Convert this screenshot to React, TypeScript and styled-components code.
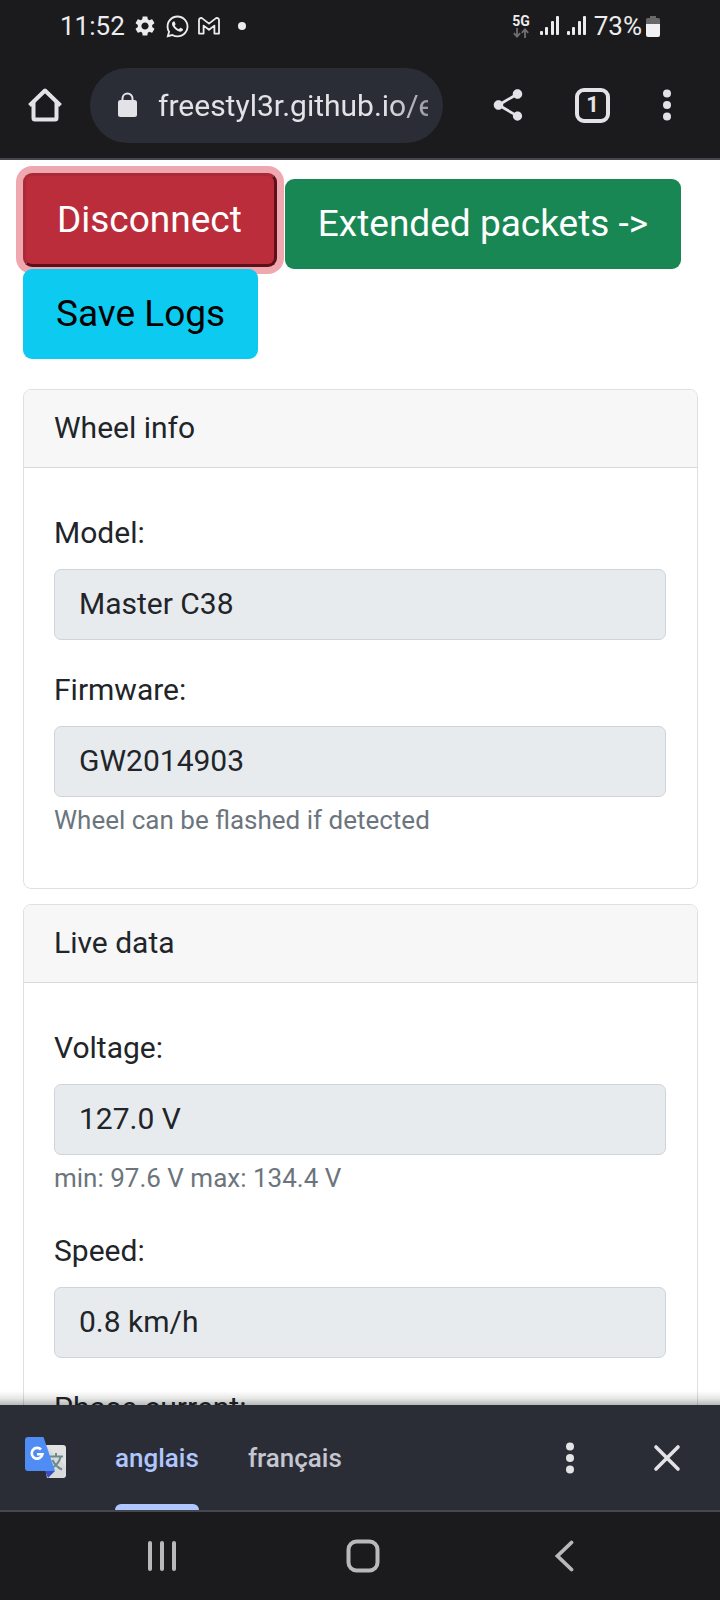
import React from "react";
import styled, { createGlobalStyle } from "styled-components";
import { MdSettings, MdShare } from "react-icons/md";
import { FaWhatsapp } from "react-icons/fa";

const GlobalStyle = createGlobalStyle`
  *, *::before, *::after { box-sizing: border-box; }
  body {
    margin: 0;
    background: #fff;
    font-family: Roboto, "Liberation Sans", sans-serif;
  }
  button, input { font-family: inherit; }
`;

const Screen = styled.div`
  display: flex;
  flex-direction: column;
  height: 100vh;
`;

/* ---------- phone status bar ---------- */

const StatusBar = styled.div`
  display: flex;
  justify-content: space-between;
  align-items: center;
  height: 52px;
  padding: 0 60px;
  background: #1b1b1d;
  color: #ececee;
  font-size: 26px;
  line-height: 32px;
`;

const StatusGroup = styled.div<{ $gap: number }>`
  display: flex;
  align-items: center;
  gap: ${(p) => p.$gap}px;
`;

const Network = styled.span`
  display: flex;
  flex-direction: column;
  align-items: center;
  font-size: 14px;
  font-weight: 700;
  line-height: 13px;
`;

/* ---------- browser toolbar ---------- */

const Toolbar = styled.header`
  display: flex;
  align-items: center;
  height: 108px;
  padding: 0 16px 0 0;
  background: #1b1b1d;
  border-bottom: 2px solid #46464f;
  color: #e3e2e6;
`;

const IconButton = styled.button<{ $width: number }>`
  display: flex;
  flex: none;
  align-items: center;
  justify-content: center;
  width: ${(p) => p.$width}px;
  height: 76px;
  padding: 0;
  border: 0;
  background: none;
  color: inherit;
`;

const AddressBar = styled.label`
  display: flex;
  flex: 1;
  align-items: center;
  gap: 20px;
  min-width: 0;
  height: 75px;
  margin-right: 18px;
  padding: 0 15px 0 27px;
  border-radius: 38px;
  background: #2b2d36;
`;

const AddressInput = styled.input`
  flex: 1;
  min-width: 0;
  height: 44px;
  padding: 0;
  border: 0;
  outline: 0;
  background: none;
  color: #e3e2e6;
  font-size: 30px;
  mask-image: linear-gradient(to left, rgba(0, 0, 0, 0.6), #000 44px);
`;

const TabCount = styled.span`
  display: flex;
  align-items: center;
  justify-content: center;
  width: 35px;
  height: 35px;
  border: 4px solid #e3e2e6;
  border-radius: 9px;
  font-size: 22px;
  font-weight: 700;
  line-height: 24px;
`;

/* ---------- web page ---------- */

const Page = styled.main`
  flex: 1;
  min-height: 0;
  overflow-y: auto;
  scrollbar-width: none;
  padding: 13px 22px 0 23px;
  color: #212529;
  font-size: 30px;
  line-height: 45px;
`;

const Actions = styled.div`
  display: flex;
  flex-wrap: wrap;
  align-items: flex-end;
  column-gap: 8px;
  margin-bottom: 30px;
`;

const ActionButton = styled.button<{ $bg: string; $color: string }>`
  padding: 17px 33px;
  border: 0;
  border-radius: 9px;
  background: ${(p) => p.$bg};
  color: ${(p) => p.$color};
  font-size: 37px;
  line-height: 56px;
`;

const FocusedButton = styled(ActionButton)`
  margin-bottom: 2px;
  padding: 16px 32px 16px 31px;
  border: 3px solid;
  border-color: #ab2a37 #5c1019 #5c1019 #ab2a37;
  box-shadow: 0 0 0 7px #f0a8b0;
`;

const Card = styled.section`
  margin-bottom: 15px;
  border: 1px solid #dfdfdf;
  border-radius: 8px;
  background: #fff;
`;

const CardHeader = styled.h2`
  margin: 0;
  padding: 15px 30px 17px;
  border-bottom: 1px solid #d9d9d9;
  border-radius: 7px 7px 0 0;
  background: #f7f7f7;
  font-size: 30px;
  font-weight: 400;
  line-height: 45px;
`;

const CardBody = styled.div`
  display: flex;
  flex-direction: column;
  gap: 27px;
  padding: 42px 31px 45px 30px;
`;

const FieldBox = styled.div`
  display: flex;
  flex-direction: column;
`;

const FieldLabel = styled.label`
  margin-bottom: 14px;
`;

const FieldInput = styled.input`
  width: 100%;
  height: 71px;
  padding: 0 24px 3px;
  border: 1px solid #ced4da;
  border-radius: 7px;
  outline: 0;
  background: #e8ebee;
  color: #212529;
  font-size: 30px;
`;

const FieldHint = styled.small`
  margin: 4px 0;
  color: #6c757d;
  font-size: 26px;
  line-height: 38px;
`;

/* ---------- translate bar ---------- */

const TranslateBar = styled.div`
  position: relative;
  display: flex;
  align-items: stretch;
  height: 107px;
  padding: 0 16px 0 24px;
  border-bottom: 2px solid #46464f;
  background: #2b2d36;
  color: #e3e2e6;

  &::before {
    content: "";
    position: absolute;
    right: 0;
    bottom: 100%;
    left: 0;
    height: 14px;
    background: linear-gradient(to top, rgba(0, 0, 0, 0.28), rgba(0, 0, 0, 0.1) 45%, transparent);
    pointer-events: none;
  }

  > svg, > button { align-self: center; }
`;

const Languages = styled.div`
  display: flex;
  flex: 1;
  gap: 49px;
  margin-left: 48px;
`;

const Language = styled.button<{ $active?: boolean }>`
  position: relative;
  padding: 0;
  border: 0;
  background: none;
  color: ${(p) => (p.$active ? "#b0c6ff" : "#c6c6d0")};
  font-size: 26px;
  font-weight: 500;
  line-height: 32px;

  &::after {
    content: "";
    display: ${(p) => (p.$active ? "block" : "none")};
    position: absolute;
    right: 0;
    bottom: 0;
    left: 0;
    height: 6px;
    border-radius: 6px 6px 0 0;
    background: #b0c6ff;
  }
`;

/* ---------- system navigation ---------- */

const NavBar = styled.nav`
  display: flex;
  flex: none;
  height: 88px;
  padding: 0 55px 0 61px;
  background: #1b1b1d;
  color: #b9b9bb;
`;

const NavButton = styled.button`
  display: flex;
  flex: 1;
  align-items: center;
  justify-content: center;
  padding: 0;
  border: 0;
  background: none;
  color: inherit;
`;

/* ---------- icons ---------- */

const MailIcon = () => (
  <svg width="22" height="18" viewBox="0 0 22 18" fill="none" stroke="currentColor" strokeWidth="1.8" strokeLinejoin="round">
    <path d="M1 3.2C1 1.2 3.2.4 4.6 1.6L11 6.6 17.4 1.6C18.8.4 21 1.2 21 3.2V16.6H16.4V8.6L11 12.8 5.6 8.6V16.6H1Z" />
  </svg>
);

const DataArrows = () => (
  <svg width="16" height="10" viewBox="0 0 16 10" fill="none" stroke="#6f6f72" strokeWidth="1.8">
    <path d="M4 0V8.5M.8 5.2 4 8.6 7.2 5.2M12 10V1.5M8.8 4.8 12 1.4 15.2 4.8" />
  </svg>
);

const SignalIcon = () => (
  <svg width="19" height="20" viewBox="0 0 19 20" fill="currentColor">
    <rect x="0" y="15" width="3" height="4" rx="1" />
    <rect x="5" y="11" width="3" height="8" rx="1" />
    <rect x="11" y="5" width="3" height="14" rx="1" />
    <rect x="16" y="0" width="3" height="19" rx="1" />
  </svg>
);

const BatteryIcon = () => (
  <svg width="14" height="21" viewBox="0 0 14 21">
    <path d="M4 0H10V2H12.5Q14 2 14 4V9H0V4Q0 2 1.5 2H4Z" fill="#68686b" />
    <path d="M0 8H14V19Q14 21 12 21H2Q0 21 0 19Z" fill="#f1f1f3" />
  </svg>
);

const HomeIcon = () => (
  <svg width="36" height="36" viewBox="0 0 36 36" fill="none" stroke="currentColor" strokeWidth="4">
    <path d="M2.5 18.5 18 3.5 33.5 18.5" strokeLinejoin="round" />
    <path d="M6.5 15V31Q6.5 32.5 8 32.5H28Q29.5 32.5 29.5 31V15" />
  </svg>
);

const LockIcon = () => (
  <svg width="21" height="26" viewBox="0 0 21 26">
    <path d="M5.5 10V6.5a5 5 0 0 1 10 0V10" fill="none" stroke="currentColor" strokeWidth="2" />
    <rect x="1" y="8" width="19" height="17" rx="2.5" fill="currentColor" />
  </svg>
);

const DotsIcon = () => (
  <svg width="10" height="32" viewBox="0 0 10 32" fill="currentColor">
    <circle cx="5" cy="4.5" r="4" />
    <circle cx="5" cy="16" r="4" />
    <circle cx="5" cy="27.5" r="4" />
  </svg>
);

const CloseIcon = () => (
  <svg width="28" height="28" viewBox="0 0 28 28" fill="none" stroke="currentColor" strokeWidth="3.6" strokeLinecap="round">
    <path d="M3 3 25 25M25 3 3 25" />
  </svg>
);

const TranslateIcon = () => (
  <svg width="43" height="42" viewBox="0 0 43 42" fill="none">
    <path d="M17 8H39Q42 8 42 11V38Q42 41 39 41H23Z" fill="#e2e2e2" />
    <path d="M21 8 30 33 23 41H38L42 36V30L30 17Z" fill="#d2d2d4" opacity=".5" />
    <path d="M25 19.5H39M32 16V19.5M26.5 32C32 29 35.5 25 36.5 19.8M28.5 23C30.5 27.5 33.5 30.5 38 32.5" stroke="#6d8a8d" strokeWidth="2" />
    <path d="M21 34H31L24 41Z" fill="#3a4fbf" />
    <path d="M4 0H19.5L31 34H4Q1 34 1 31V3Q1 0 4 0Z" fill="#4f8df5" />
    <path d="M17 12.5A5.4 5.4 0 1 0 18.4 17.3H13" stroke="#fff" strokeWidth="2.6" />
  </svg>
);

const RecentsIcon = () => (
  <svg width="30" height="32" viewBox="0 0 30 32" stroke="currentColor" strokeWidth="4" strokeLinecap="round">
    <path d="M3 3V29M15 3V29M27 3V29" />
  </svg>
);

const NavHomeIcon = () => (
  <svg width="34" height="34" viewBox="0 0 34 34" fill="none" stroke="currentColor" strokeWidth="4">
    <rect x="2.5" y="2.5" width="29" height="29" rx="8" />
  </svg>
);

const BackIcon = () => (
  <svg width="20" height="32" viewBox="0 0 20 32" fill="none" stroke="currentColor" strokeWidth="3.8" strokeLinecap="round">
    <path d="M17.5 2.5 3.5 16 17.5 29.5" />
  </svg>
);

interface FieldProps {
  id: string;
  label: string;
  value?: string;
  hint?: string;
}

const Field = ({ id, label, value = "", hint }: FieldProps) => (
  <FieldBox>
    <FieldLabel htmlFor={id}>{label}</FieldLabel>
    <FieldInput id={id} type="text" value={value} readOnly />
    {hint && <FieldHint>{hint}</FieldHint>}
  </FieldBox>
);

export default function App() {
  return (
    <Screen>
      <GlobalStyle />
      <StatusBar>
        <StatusGroup $gap={8}>
          <span>11:52</span>
          <MdSettings size={24} />
          <FaWhatsapp size={25} />
          <MailIcon />
          <svg width="26" height="8" viewBox="0 0 26 8" fill="currentColor">
            <circle cx="14" cy="4" r="4" />
          </svg>
        </StatusGroup>
        <StatusGroup $gap={8}>
          <StatusGroup $gap={10}>
            <Network>
              5G
              <DataArrows />
            </Network>
            <SignalIcon />
          </StatusGroup>
          <SignalIcon />
          <StatusGroup $gap={4}>
            <span>73%</span>
            <BatteryIcon />
          </StatusGroup>
        </StatusGroup>
      </StatusBar>

      <Toolbar>
        <IconButton $width={90} aria-label="Home">
          <HomeIcon />
        </IconButton>
        <AddressBar>
          <LockIcon />
          <AddressInput type="text" aria-label="Address" value="freestyl3r.github.io/e" readOnly />
        </AddressBar>
        <IconButton $width={94} aria-label="Share">
          <MdShare size={38} />
        </IconButton>
        <IconButton $width={75} aria-label="Tabs">
          <TabCount>1</TabCount>
        </IconButton>
        <IconButton $width={74} aria-label="Menu">
          <DotsIcon />
        </IconButton>
      </Toolbar>

      <Page>
        <Actions>
          <FocusedButton $bg="#bb2d3b" $color="#fff">Disconnect</FocusedButton>
          <ActionButton $bg="#198754" $color="#fff">Extended packets -&gt;</ActionButton>
          <ActionButton $bg="#0dcaf0" $color="#000">Save Logs</ActionButton>
        </Actions>

        <Card>
          <CardHeader>Wheel info</CardHeader>
          <CardBody>
            <Field id="model" label="Model:" value="Master C38" />
            <Field id="firmware" label="Firmware:" value="GW2014903" hint="Wheel can be flashed if detected" />
          </CardBody>
        </Card>

        <Card>
          <CardHeader>Live data</CardHeader>
          <CardBody>
            <Field id="voltage" label="Voltage:" value="127.0 V" hint="min: 97.6 V max: 134.4 V" />
            <Field id="speed" label="Speed:" value="0.8 km/h" />
            <Field id="phase-current" label="Phase current:" />
          </CardBody>
        </Card>
      </Page>

      <TranslateBar>
        <TranslateIcon />
        <Languages>
          <Language $active>anglais</Language>
          <Language>français</Language>
        </Languages>
        <IconButton $width={120} aria-label="Translate options">
          <DotsIcon />
        </IconButton>
        <IconButton $width={74} aria-label="Close">
          <CloseIcon />
        </IconButton>
      </TranslateBar>

      <NavBar>
        <NavButton aria-label="Recent apps">
          <RecentsIcon />
        </NavButton>
        <NavButton aria-label="Home screen">
          <NavHomeIcon />
        </NavButton>
        <NavButton aria-label="Back">
          <BackIcon />
        </NavButton>
      </NavBar>
    </Screen>
  );
}
